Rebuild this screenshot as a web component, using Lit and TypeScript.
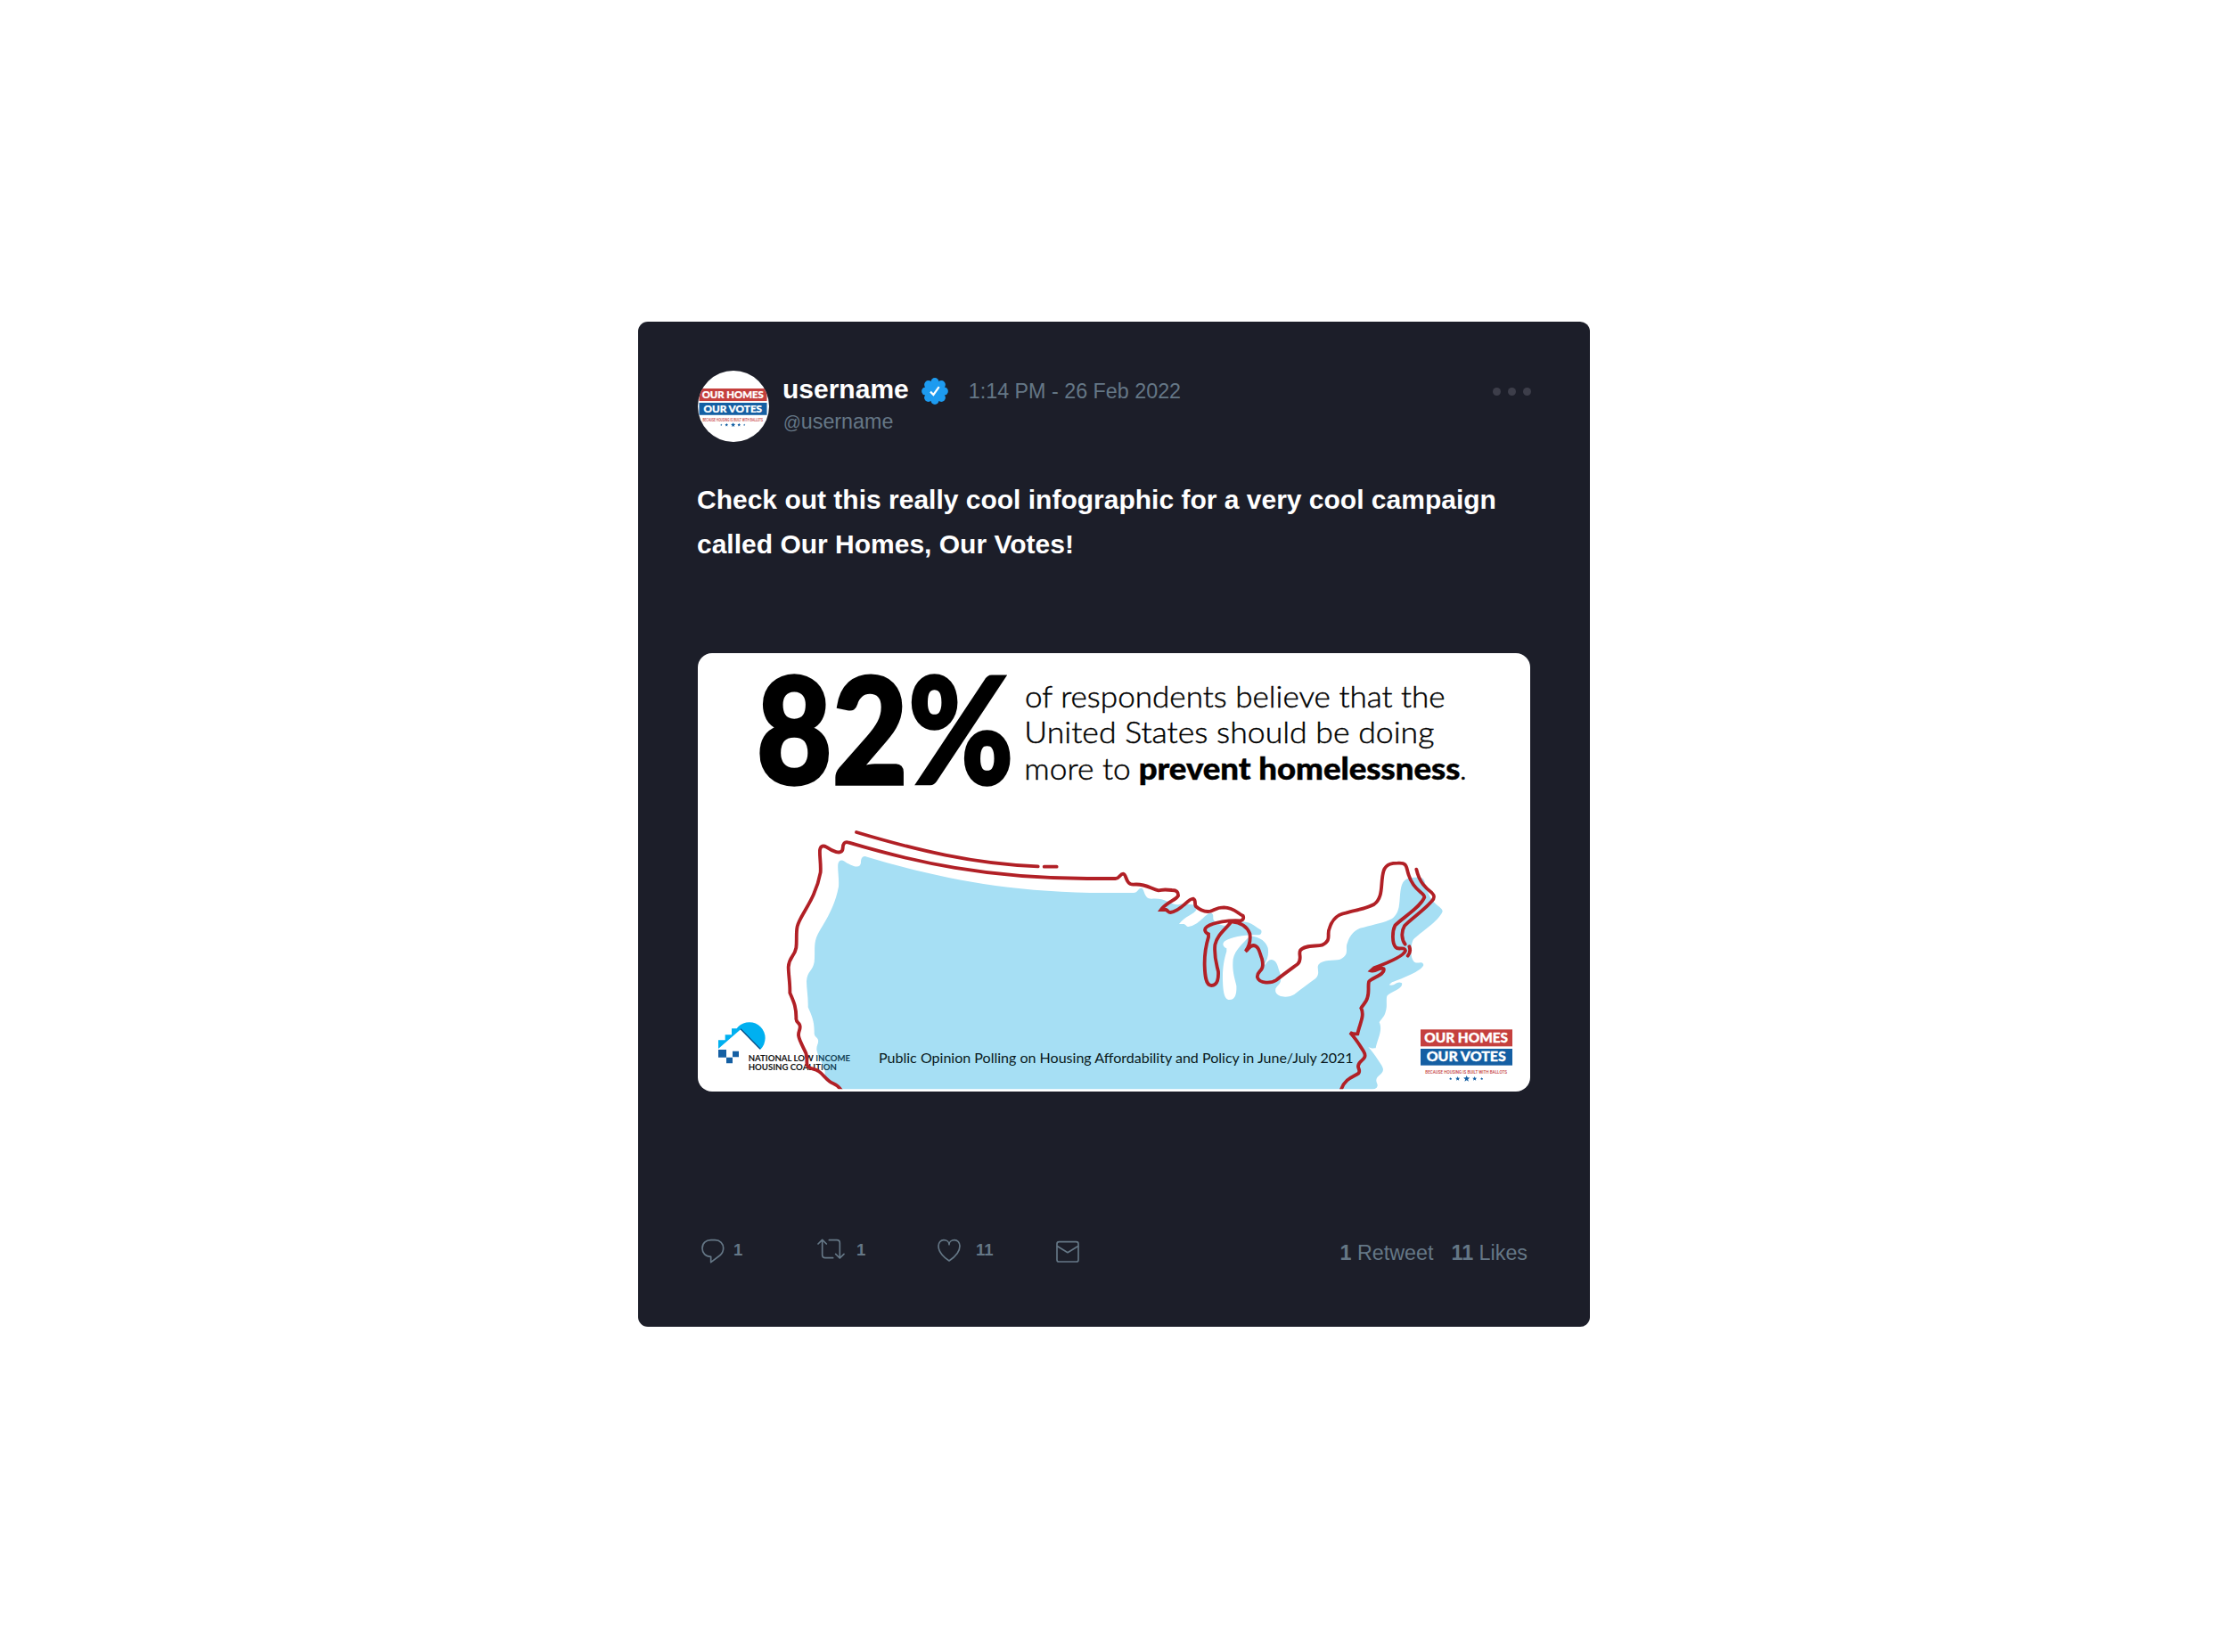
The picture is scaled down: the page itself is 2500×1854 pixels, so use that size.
import { LitElement, html, css, svg } from "lit";
import { customElement, property } from "lit/decorators.js";

// one coastline, used both as the red line and as the shifted blue area
const COAST = `M-885 975 C-896 955 -905 951 -915 947 C-938 938 -948 916 -965 905 C-980 896 -998 898 -1003 885
  C-1006 872 -1001 860 -1007 845 C-1014 828 -1030 802 -1032 785 C-1033 768 -1023 763 -1028 750
  C-1031 742 -1039 742 -1040 730 C-1039 690 -1048 672 -1061 642 C-1060 610 -1066 580 -1066 555
  C-1064 520 -1045 520 -1040 490 C-1037 465 -1041 440 -1036 418 C-1028 380 -975 330 -958 236
  C-956 205 -962 180 -960 160 C-957 146 -948 145 -938 151 C-922 162 -885 182 -883 155
  C-883 140 -877 130 -862 136 C-640 202 -400 256 -60 257 L35 257 C48 257 50 241 61 241
  C73 242 68 277 95 277 C135 272 155 292 180 297 C195 296 190 292 225 296 C240 297 247 300 246 315
  C240 328 205 338 188 362 L205 362 C215 368 212 371 220 371 C255 368 280 322 297 325
  C307 330 300 340 305 350 C325 368 345 369 355 367 C370 362 375 354 400 354 C435 355 447 375 464 382
  C468 390 464 398 456 399 C420 396 365 404 343 419 C332 427 335 438 348 444 L348 454
  C340 480 334 510 335 550 C336 580 338 617 358 617 C380 617 382 590 381 570 C374 540 366 520 370 480
  C377 448 400 432 426 402 C465 406 480 423 487 442 C490 460 488 480 473 502
  C485 495 484 483 500 482 C520 485 520 510 528 527 C540 575 508 565 513 590 C520 612 560 610 576 599
  C600 580 625 562 648 545 C665 528 650 512 657 499 C670 480 710 486 730 481 C765 465 745 445 755 425
  C760 408 775 378 810 373 C845 363 880 358 905 344 C940 318 925 270 938 230 C947 205 970 205 985 205
  C1020 202 1013 222 1022 245 C1040 302 1075 302 1075 320 C1060 355 1000 390 976 415
  C966 435 966 475 978 488 C988 500 1007 483 1011 500 C1005 520 940 545 905 558 L895 567
  C915 573 920 552 938 561 C944 580 900 590 888 604 C884 618 890 640 883 658 C880 673 868 682 862 693
  C875 720 855 750 850 780 C840 781 836 781 825 776 C840 792 860 822 870 838 C888 868 850 868 852 890
  C853 900 860 903 853 913 C835 925 808 930 795 966 L795 1010 L-890 1010 Z`;

const star = (x: number, r: number) => {
  const points = [];
  for (let i = 0; i < 10; i++) {
    const radius = i % 2 ? r * 0.45 : r;
    const angle = (i * Math.PI) / 5 - Math.PI / 2;
    points.push(`${(x + radius * Math.cos(angle)).toFixed(1)},${(166 + radius * Math.sin(angle)).toFixed(1)}`);
  }
  return svg`<polygon class="navy" points="${points.join(" ")}"/>`;
};

const campaignLogo = svg`
  <rect class="brick" width="309" height="57"/>
  <rect class="navy" y="65" width="309" height="56"/>
  <text class="logo-text" x="13" y="44" textLength="281" lengthAdjust="spacingAndGlyphs">OUR HOMES</text>
  <text class="logo-text" x="20" y="108" textLength="267" lengthAdjust="spacingAndGlyphs">OUR VOTES</text>
  <text class="logo-tagline" x="16" y="149" textLength="275" lengthAdjust="spacingAndGlyphs">BECAUSE HOUSING IS BUILT WITH BALLOTS</text>
  ${[[101, 5], [125, 8], [155, 11], [182, 8], [206, 5]].map(([x, r]) => star(x, r))}
`;

const logoStyles = css`
  svg {
    display: block;
  }

  .brick {
    fill: #c5403e;
  }

  .navy {
    fill: #145fa3;
  }

  .logo-text {
    font: 900 43px Lato, sans-serif;
    fill: #fff;
    stroke: #fff;
    stroke-width: 1;
  }

  .logo-tagline {
    font: 500 18.5px Roboto, sans-serif;
    fill: #c5403e;
  }
`;

@customElement("tweet-avatar")
export class TweetAvatar extends LitElement {
  static styles = [logoStyles, css`
    :host {
      display: block;
      width: 80px;
      height: 80px;
      border-radius: 50%;
      overflow: hidden;
      background: #fff;
    }
  `];

  render() {
    return html`<svg width="80" height="80" viewBox="0 0 240 240">
      <g transform="translate(4.5 60) scale(0.738)">${campaignLogo}</g>
    </svg>`;
  }
}

@customElement("tweet-infographic")
export class TweetInfographic extends LitElement {
  static styles = [logoStyles, css`
    :host {
      display: block;
      height: 492px;
      border-radius: 16px;
      overflow: hidden;
      background: #fff;
    }

    .land {
      fill: #a6dff4;
    }

    .outline {
      fill: none;
      stroke: #b12026;
      stroke-width: 11.5;
      stroke-linecap: round;
      stroke-linejoin: miter;
    }

    .percent {
      font: 900 500px Lato, sans-serif;
      stroke: #000;
      stroke-width: 10;
    }

    .claim {
      font: 300 103px Lato, sans-serif;
      stroke: #000;
      stroke-width: 1.4;
    }

    .claim--strong {
      font-weight: 900;
    }

    .source {
      font: 400 47px Lato, sans-serif;
      fill: #0a1a20;
    }

    .coalition {
      font: 700 27px Lato, sans-serif;
      fill: #111;
    }

    .coalition__tint {
      fill: #123f56;
    }

    .sky {
      fill: #00b0f0;
    }

    .roof {
      stroke: #0a4f86;
      stroke-width: 4;
    }
  `];

  render() {
    return html`<svg width="934" height="492" viewBox="0 0 2802 1476">
      <defs>
        <clipPath id="frame"><rect x="-1371" y="-502" width="2802" height="1468"/></clipPath>
      </defs>
      <text class="percent" x="197" y="441" textLength="510" lengthAdjust="spacingAndGlyphs">82</text>
      <text class="percent" x="708" y="441" textLength="355" lengthAdjust="spacingAndGlyphs">%</text>
      <text class="claim" x="1101" y="183" textLength="1415" lengthAdjust="spacingAndGlyphs">of respondents believe that the</text>
      <text class="claim" x="1099" y="304" textLength="1380" lengthAdjust="spacingAndGlyphs">United States should be doing</text>
      <text class="claim" x="1099" y="425" textLength="358" lengthAdjust="spacingAndGlyphs">more to</text>
      <text class="claim claim--strong" x="1484" y="425" textLength="1082" lengthAdjust="spacingAndGlyphs">prevent homelessness</text>
      <text class="claim" x="2564" y="425">.</text>

      <g transform="translate(1371 502)" clip-path="url(#frame)">
        <path class="land" d="${COAST}" transform="translate(61 48)"/>
      </g>

      <g transform="translate(-39 742)">
        <path class="sky" d="M108 590V561H131V543H153V522H170L175 516A53 53 0 0 1 250 592L184 524Z"/>
        <path class="roof" d="M183 523L249 591"/>
        <path class="navy" d="M108 593h27v26h-27zM156 598h21v20h-21zM135 619h21v20h-21z"/>
      </g>
      <text class="coalition" x="170" y="1373" textLength="343" lengthAdjust="spacingAndGlyphs">NATIONAL LOW <tspan class="coalition__tint">INCOME</tspan></text>
      <text class="coalition" x="170" y="1405" textLength="298" lengthAdjust="spacingAndGlyphs">HOUSING COALIT<tspan class="coalition__tint">ION</tspan></text>
      <text class="source" x="609" y="1379" textLength="1598" lengthAdjust="spacingAndGlyphs">Public Opinion Polling on Housing Affordability and Policy in June/July 2021</text>

      <g transform="translate(1371 502)" clip-path="url(#frame)">
        <path class="outline" d="${COAST}"/>
        <path class="outline" d="M-837 101C-640 160 -440 209 -226 216M-205 217H-163"/>
        <path class="outline" d="M1048 226C1058 270 1080 290 1100 305C1110 315 1110 322 1100 333C1070 367 1030 392 1008 416C996 436 998 462 1010 478M1024 486Q1031 503 1019 517"/>
      </g>
      <g transform="translate(2433 1267)">${campaignLogo}</g>
    </svg>`;
  }
}

@customElement("app-root")
export class AppRoot extends LitElement {
  static styles = css`
    :host {
      display: flex;
      justify-content: center;
      box-sizing: border-box;
      height: 1854px;
      padding-top: 361px;
      background: #fff;
      color: #657786;
      font-family: "Liberation Sans", Arial, sans-serif;
      font-size: 23.3px;
    }

    svg {
      display: block;
    }

    .tweet {
      box-sizing: border-box;
      width: 1068px;
      height: 1128px;
      padding: 55px 67px 0;
      border-radius: 11px;
      background: #1c1e29;
    }

    .tweet__header {
      display: flex;
      height: 120px;
    }

    .tweet__author {
      flex: 1;
      padding-left: 15px;
    }

    .tweet__line {
      display: flex;
      align-items: center;
      height: 40px;
      padding-top: 1px;
      line-height: 40px;
    }

    .tweet__name {
      color: #fff;
      font-size: 30px;
      font-weight: 700;
    }

    .tweet__badge {
      margin: 4px 23px 0 14px;
    }

    .tweet__time {
      padding-top: 4px;
    }

    .tweet__handle {
      padding: 1px 0 0 1px;
      line-height: 30px;
    }

    .tweet__at {
      font-size: 19.5px;
    }

    .tweet__menu {
      display: flex;
      gap: 8px;
      margin-right: -1px;
      padding-top: 19px;
    }

    .tweet__dot {
      width: 9px;
      height: 9px;
      border-radius: 50%;
      background: #3d3e4a;
    }

    .tweet__text {
      height: 197px;
      margin: 0 0 0 -1px;
      color: #fff;
      font-size: 30px;
      font-weight: 700;
      line-height: 50px;
    }

    .tweet__footer {
      display: grid;
      grid-template-columns: 130px 135px 133px 1fr auto;
      margin-top: 160px;
      padding: 0 3px 0 4px;
    }

    .tweet__action {
      display: flex;
      font-size: 18.5px;
      font-weight: 700;
      line-height: 35px;
    }

    .tweet__action svg {
      fill: none;
      stroke: #657786;
      stroke-width: 5;
      stroke-linecap: round;
      stroke-linejoin: round;
    }

    .tweet__action--reply {
      gap: 10px;
    }

    .tweet__action--retweet {
      gap: 13px;
    }

    .tweet__action--like {
      gap: 17px;
    }

    .tweet__stats {
      display: flex;
      gap: 20px;
      line-height: 42px;
    }
  `;

  @property({ type: Number })
  retweets = 1;

  @property({ type: Number })
  likes = 11;

  renderBadge() {
    const lobes = [0, 45, 90, 135, 180, 225, 270, 315];
    return html`<svg class="tweet__badge" width="30" height="30" viewBox="0 0 30 30">
      <g fill="#1d9bf0">
        <circle cx="15" cy="15" r="11.5"/>
        ${lobes.map((angle) => svg`<circle cx="15" cy="4.7" r="4.6" transform="rotate(${angle} 15 15)"/>`)}
      </g>
      <path d="M10 15.6L13.4 19L19.7 10.2" fill="none" stroke="#fff" stroke-width="2.2"/>
    </svg>`;
  }

  render() {
    return html`<article class="tweet">
      <header class="tweet__header">
        <tweet-avatar></tweet-avatar>
        <div class="tweet__author">
          <div class="tweet__line">
            <span class="tweet__name">username</span>
            ${this.renderBadge()}
            <span class="tweet__time">1:14 PM - 26 Feb 2022</span>
          </div>
          <div class="tweet__handle"><span class="tweet__at">@</span>username</div>
        </div>
        <div class="tweet__menu">
          <span class="tweet__dot"></span>
          <span class="tweet__dot"></span>
          <span class="tweet__dot"></span>
        </div>
      </header>
      <p class="tweet__text">Check out this really cool infographic for a very cool campaign called Our Homes, Our Votes!</p>
      <tweet-infographic></tweet-infographic>
      <footer class="tweet__footer">
        <div class="tweet__action tweet__action--reply">
          <svg width="26" height="34" viewBox="80 75 78 102">
            <path d="M112 151C94 151 83 139 83 123C83 106 95 95 112 95H126C143 95 154 107 154 122C154 133 150 140 142 147L112 170Z"/>
          </svg>
          <span>${this.retweets}</span>
        </div>
        <div class="tweet__action tweet__action--retweet">
          <svg width="31" height="34" viewBox="470 75 93 102">
            <path d="M510 95H536Q546 95 546 105V155M532 142L546 156L560 142M523 155H497Q487 155 487 145V95M473 108L487 94L501 108"/>
          </svg>
          <span>${this.retweets}</span>
        </div>
        <div class="tweet__action tweet__action--like">
          <svg width="26" height="34" viewBox="875 75 78 102">
            <path d="M914 165C899 156 878 137 878 115C878 103 886 95 896 95C906 95 914 101 914 110C914 101 922 95 932 95C942 95 950 103 950 115C950 137 928 156 914 165Z"/>
          </svg>
          <span>${this.likes}</span>
        </div>
        <div class="tweet__action">
          <svg width="26" height="34" viewBox="1275 75 78 102">
            <rect x="1278" y="101" width="72" height="67" rx="7"/>
            <path d="M1280 116L1314 137L1348 116"/>
          </svg>
        </div>
        <div class="tweet__stats">
          <span><b>${this.retweets}</b> Retweet</span>
          <span><b>${this.likes}</b> Likes</span>
        </div>
      </footer>
    </article>`;
  }
}
